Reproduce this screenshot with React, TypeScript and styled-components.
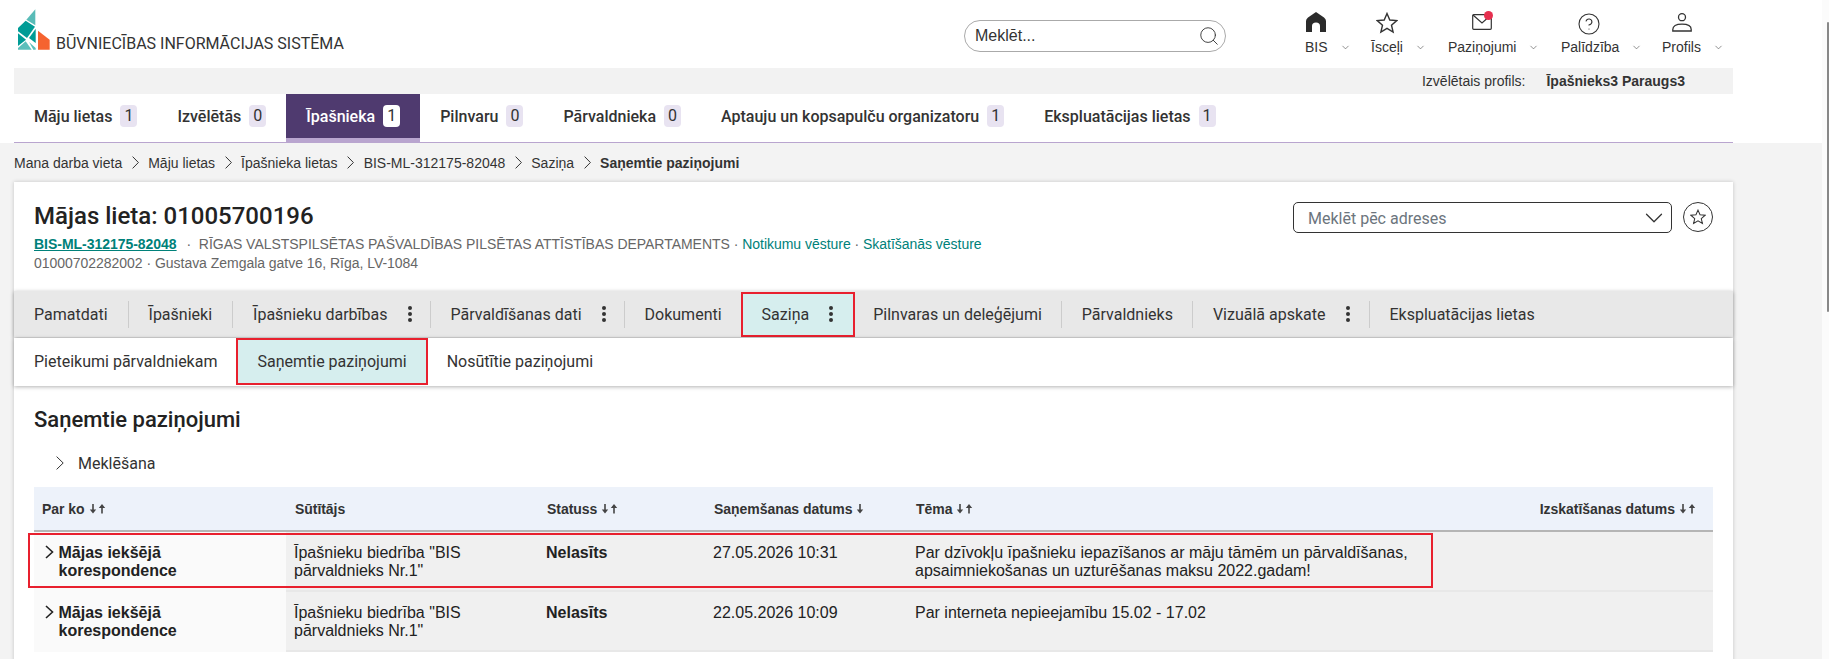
import React from "react";
import styled, { createGlobalStyle } from "styled-components";
import { ChevronDown, CircleHelp, Search } from "lucide-react";

const ARIAL = `"Liberation Sans", Arial, sans-serif`;

const Global = createGlobalStyle`
  html, body { margin: 0; padding: 0; background: #f3f3f3; overflow: hidden; }
  body { font-family: Roboto, "Liberation Sans", sans-serif; color: #222; }
  * { box-sizing: border-box; }
`;
const Page = styled.div`width: 1829px; height: 659px; overflow: hidden; position: relative;`;
const Header = styled.header`background: #fff; height: 143px;`;
const Top = styled.div`height: 68px; display: flex; align-items: flex-start;`;
const Brand = styled.div`display: flex; align-items: flex-end; margin: 9px 0 0 18px; width: 946px;`;
const BrandText = styled.span`font-size: 16px; margin-left: 6px; line-height: 16px; height: 14px; color: #333; white-space: nowrap;`;
const SearchBox = styled.div`margin-top: 20px; width: 262px; height: 32px; border: 1px solid #aaa; border-radius: 16px; display: flex; align-items: center; justify-content: space-between; padding: 0 5px 0 10px; font-family: ${ARIAL}; font-size: 16px; color: #333;`;
const Menu = styled.nav`display: flex; margin: 12px 0 0 79px;`;
const MenuItem = styled.div<{ $w: number }>`width: ${p => p.$w}px; display: flex; flex-direction: column; align-items: flex-start; font-family: ${ARIAL}; font-size: 14px; color: #333;`;
const MenuIcon = styled.div<{ $l: number; $t?: number }>`height: 26px; margin-left: ${p => p.$l}px; padding-top: ${p => p.$t ?? 0}px; position: relative;`;
const Dot = styled.span`position: absolute; width: 9px; height: 9px; border-radius: 50%; background: #e6304f; left: 12px; top: -1px;`;
const MenuLabel = styled.div`display: flex; align-items: center; gap: 12px; line-height: 18px; white-space: nowrap;`;
const Profile = styled.div`height: 26px; width: 1719px; margin-left: 14px; background: #f2f2f2; display: flex; justify-content: flex-end; align-items: center; font-family: ${ARIAL}; font-size: 14px; padding-right: 48px; gap: 21px; color: #333;`;
const ProfileName = styled.b`font-weight: 700;`;
const Tabs = styled.div`height: 49px; width: 1719px; margin-left: 14px; border-bottom: 1px solid #b9a5cf; display: flex;`;
const Tab = styled.div<{ $a?: boolean }>`padding: 0 20px; display: flex; align-items: center; gap: 8px; font-size: 16px; font-weight: 500; height: 48px; background: ${p => p.$a ? "#4f3a6f" : "transparent"}; color: ${p => p.$a ? "#fff" : "#333"}; border-bottom: 4px solid ${p => p.$a ? "#b9a5cf" : "transparent"}; white-space: nowrap;`;
const Count = styled.span<{ $a?: boolean }>`background: ${p => p.$a ? "#fff" : "#e8e3f1"}; color: #333; border-radius: 4px; font-weight: 400; padding: 0 4px; height: 22px; line-height: 22px; font-size: 16px;`;
const Main = styled.main`width: 1719px; margin-left: 14px;`;
const Crumbs = styled.div`height: 39px; display: flex; align-items: center; font-family: ${ARIAL}; font-size: 14px; color: #333; white-space: nowrap;`;
const CrumbLast = styled.b`font-weight: 700;`;
const CrumbGlyph = styled.svg`margin: 0 9.5px; flex: none;`;
const Card = styled.section`background: #fff; box-shadow: 0 0 4px rgba(0,0,0,.2); height: 500px;`;
const CardHead = styled.div`height: 109px; padding: 18px 20px 0; display: flex; justify-content: space-between;`;
const Title = styled.h1`font-size: 24px; font-weight: 500; margin: 0; line-height: 32px; color: #222;`;
const Meta = styled.div`font-family: ${ARIAL}; font-size: 14px; letter-spacing: -0.03px; color: #666; line-height: 19px; margin-top: 3px; white-space: nowrap; & + & { margin-top: 0; }`;
const CaseLink = styled.span`color: #00817a; font-weight: 700; text-decoration: underline; margin-right: 6px;`;
const MetaLink = styled.span`color: #00817a;`;
const HeadRight = styled.div`display: flex; gap: 11px; align-items: flex-start; padding-top: 2px;`;
const Select = styled.div`width: 379px; height: 31px; border: 1px solid #333; border-radius: 5px; display: flex; align-items: center; justify-content: space-between; padding: 1px 2px 0 14px; font-size: 16px; color: #6c757d;`;
const Round = styled.div`width: 30px; height: 30px; border: 1px solid #333; border-radius: 50%; display: flex; align-items: center; justify-content: center;`;
const Nav = styled.div`height: 46px; background: #e8e8e8; display: flex; align-items: center; box-shadow: 0 1px 4px rgba(0,0,0,.3); position: relative;`;
const NavItem = styled.div<{ $sep?: boolean; $l?: number; $r?: number }>`
  height: 27px;
  display: flex; align-items: center; gap: 12px;
  padding: 0 ${p => p.$r ?? 20}px 0 ${p => p.$l ?? 20}px;
  font-size: 16px; color: #333; white-space: nowrap;
  border-right: ${p => p.$sep ? "1px solid #ccc" : "0"};
`;
const NavMarked = styled(NavItem)`height: 45px; padding: 0 14px 0 21px; background: #d6eeee; outline: 2px solid #e8202e; outline-offset: -2px;`;
const Sub = styled.div`height: 48px; margin-top: 1px; background: #fff; display: flex; align-items: center; box-shadow: 0 1px 4px rgba(0,0,0,.3); position: relative;`;
const SubItem = styled.div`padding: 0 20px; height: 47px; margin-bottom: 1px; display: flex; align-items: center; font-size: 16px; color: #333;`;
const SubMarked = styled(SubItem)`padding: 0 21px; margin-left: -1px; margin-right: -1px; background: #d6eeee; outline: 2px solid #e8202e; outline-offset: -2px;`;
const Content = styled.div`padding: 20px 20px 0;`;
const H2 = styled.h2`font-size: 22px; font-weight: 500; margin: 0 0 19px; line-height: 28px; color: #222;`;
const Toggle = styled.div`display: flex; align-items: center; gap: 14px; padding-left: 22px; font-size: 16px; height: 20px; color: #333;`;
const Table = styled.div`margin-top: 14px; width: 1679px; position: relative;`;
const Row = styled.div<{ $h: number; $head?: boolean }>`display: grid; grid-template-columns: 252px 252px 167px 202px 1fr 196px; height: ${p => p.$h}px; background: ${p => p.$head ? "#edf2fa" : "#f0f0f0"}; border-bottom: ${p => p.$head ? "2px solid #b5b5b5" : "2px solid #e8e8e8"};`;
const Th = styled.div<{ $end?: boolean; $first?: boolean }>`font-family: ${ARIAL}; font-size: 14px; letter-spacing: -0.05px; font-weight: 700; padding: 0 ${p => p.$end ? 17 : 0}px 0 ${p => p.$first ? 8 : 9}px; display: flex; align-items: center; justify-content: ${p => p.$end ? "flex-end" : "flex-start"}; gap: 4px; white-space: nowrap; color: #333;`;
const Td = styled.div<{ $bold?: boolean }>`font-family: ${ARIAL}; font-size: 16px; line-height: 18px; padding: 12px 8px; font-weight: ${p => p.$bold ? 700 : 400}; color: #222;`;
const FirstTd = styled(Td)`background: #fafafa; display: flex; align-items: flex-start; gap: 4.5px; padding-left: 11px;`;
const RowGlyph = styled.svg`flex: none; margin-top: 1px;`;
const RowTitle = styled.span`width: 140px;`;
const RedBox = styled.div`position: absolute; left: -6px; top: 46px; width: 1405px; height: 55px; border: 2px solid #e8202e; pointer-events: none;`;
const Track = styled.div`position: absolute; right: 0; top: 0; width: 7px; height: 659px; background: #fbfbfb;`;
const Thumb = styled.div`position: absolute; right: 0; top: 22px; width: 2px; height: 290px; background: #888; border-radius: 2px;`;

const Sep = () => (
  <CrumbGlyph width="7" height="13" viewBox="0 0 7 13"><polyline points="0.6,0.6 6.4,6.5 0.6,12.4" fill="none" stroke="#333" strokeWidth="1" /></CrumbGlyph>
);
const ToggleChevron = () => (
  <svg width="8" height="14" viewBox="0 0 8 14"><polyline points="0.6,0.6 7.2,7 0.6,13.4" fill="none" stroke="#333" strokeWidth="1" /></svg>
);
const Dots = () => (
  <svg width="20" height="20" viewBox="0 0 20 20"><circle cx="10" cy="4" r="2" fill="#333" /><circle cx="10" cy="10" r="2" fill="#333" /><circle cx="10" cy="16" r="2" fill="#333" /></svg>
);
const RowChevron = () => (
  <RowGlyph width="9" height="14" viewBox="0 0 9 14"><polyline points="1,1 7.5,7 1,13" fill="none" stroke="#222" strokeWidth="1.6" /></RowGlyph>
);
const DownArrow = () => (
  <svg width="8" height="10" viewBox="0 0 8 10"><path d="M3.2 0 H4.8 V5.5 H7.2 L4 9.5 L0.8 5.5 H3.2 Z" fill="#444" /></svg>
);
const Sort = () => (
  <svg width="17" height="10" viewBox="0 0 17 10">
    <path d="M3.2 0 H4.8 V5.5 H7.2 L4 9.5 L0.8 5.5 H3.2 Z" fill="#444" />
    <path d="M12.2 9.5 H13.8 V4 H16.2 L13 0 L9.8 4 H12.2 Z" fill="#444" />
  </svg>
);
const StarIcon = ({ size }: { size: number }) => (
  <svg width={size} height={size} viewBox="0 0 22 22"><polygon points="11,1.5 13.8,8 20.8,8.6 15.5,13.2 17.1,20 11,16.4 4.9,20 6.5,13.2 1.2,8.6 8.2,8" fill="none" stroke="#333" strokeWidth="1.4" strokeLinejoin="miter" /></svg>
);
const HomeIcon = () => (
  <svg width="20" height="20" viewBox="0 0 20 20"><path d="M10 0 L18 5.5 Q20 7 20 9 V20 H14 V14 Q14 10.5 10 10.5 Q6 10.5 6 14 V20 H0 V9 Q0 7 2 5.5 Z" fill="#2b2b2b" /></svg>
);
const MailIcon = () => (
  <svg width="20" height="16" viewBox="0 0 20 16"><rect x="0.7" y="0.7" width="18.6" height="14.6" rx="1" fill="none" stroke="#333" strokeWidth="1.2" /><polyline points="1,1 10,9 19,1" fill="none" stroke="#333" strokeWidth="1.2" /></svg>
);
const UserIcon = () => (
  <svg width="20" height="19" viewBox="0 0 20 19"><circle cx="10" cy="4.2" r="3.5" fill="none" stroke="#333" strokeWidth="1.3" /><path d="M0.8 18 V16.5 Q0.8 11.2 10 11.2 Q19.2 11.2 19.2 16.5 V18 Z" fill="none" stroke="#333" strokeWidth="1.3" /></svg>
);
const Logo = () => (
  <svg width="32" height="41" viewBox="25 13 96 123">
    <polygon points="50,45 77,14 77,62" fill="#59bcb8" />
    <polygon points="25,70 48,48 76,66 52,100 25,80" fill="#009c96" />
    <polygon points="25,86 49,105 25,124" fill="#009c96" />
    <polygon points="78,72 78,115 58,100" fill="#009c96" />
    <polygon points="25,130 48,110 66,135 25,135" fill="#5bbfbb" />
    <polygon points="58,112 78,130 78,135 71,135" fill="#5bbfbb" />
    <polygon points="85,78 120,105 120,135 85,135" fill="#f56330" />
  </svg>
);
const MenuChevron = () => <ChevronDown size={11} strokeWidth={1.4} color="#555" />;

export default function App() {
  return (
    <Page>
      <Global />
      <Header>
        <Top>
          <Brand><Logo /><BrandText>BŪVNIECĪBAS INFORMĀCIJAS SISTĒMA</BrandText></Brand>
          <SearchBox>Meklēt...<Search size={22} strokeWidth={1} /></SearchBox>
          <Menu>
            <MenuItem $w={66}><MenuIcon $l={1}><HomeIcon /></MenuIcon><MenuLabel>BIS<MenuChevron /></MenuLabel></MenuItem>
            <MenuItem $w={77}><MenuIcon $l={5}><StarIcon size={22} /></MenuIcon><MenuLabel>Īsceļi<MenuChevron /></MenuLabel></MenuItem>
            <MenuItem $w={113}><MenuIcon $l={24} $t={2}><MailIcon /><Dot /></MenuIcon><MenuLabel>Paziņojumi<MenuChevron /></MenuLabel></MenuItem>
            <MenuItem $w={101}><MenuIcon $l={16}><CircleHelp size={24} strokeWidth={1.1} /></MenuIcon><MenuLabel>Palīdzība<MenuChevron /></MenuLabel></MenuItem>
            <MenuItem $w={70}><MenuIcon $l={10} $t={1}><UserIcon /></MenuIcon><MenuLabel>Profils<MenuChevron /></MenuLabel></MenuItem>
          </Menu>
        </Top>
        <Profile><span>Izvēlētais profils:</span><ProfileName>Īpašnieks3 Paraugs3</ProfileName></Profile>
        <Tabs>
          <Tab>Māju lietas <Count>1</Count></Tab>
          <Tab>Izvēlētās <Count>0</Count></Tab>
          <Tab $a>Īpašnieka <Count $a>1</Count></Tab>
          <Tab>Pilnvaru <Count>0</Count></Tab>
          <Tab>Pārvaldnieka <Count>0</Count></Tab>
          <Tab>Aptauju un kopsapulču organizatoru <Count>1</Count></Tab>
          <Tab>Ekspluatācijas lietas <Count>1</Count></Tab>
        </Tabs>
      </Header>
      <Main>
        <Crumbs>Mana darba vieta<Sep />Māju lietas<Sep />Īpašnieka lietas<Sep />BIS-ML-312175-82048<Sep />Saziņa<Sep /><CrumbLast>Saņemtie paziņojumi</CrumbLast></Crumbs>
        <Card>
          <CardHead>
            <div>
              <Title>Mājas lieta: 01005700196</Title>
              <Meta><CaseLink>BIS-ML-312175-82048</CaseLink> · &nbsp;RĪGAS VALSTSPILSĒTAS PAŠVALDĪBAS PILSĒTAS ATTĪSTĪBAS DEPARTAMENTS · <MetaLink>Notikumu vēsture</MetaLink> · <MetaLink>Skatīšanās vēsture</MetaLink></Meta>
              <Meta>01000702282002 · Gustava Zemgala gatve 16, Rīga, LV-1084</Meta>
            </div>
            <HeadRight>
              <Select>Meklēt pēc adreses<ChevronDown size={30} strokeWidth={1} color="#333" /></Select>
              <Round><StarIcon size={16} /></Round>
            </HeadRight>
          </CardHead>
          <Nav>
            <NavItem $sep>Pamatdati</NavItem>
            <NavItem $sep>Īpašnieki</NavItem>
            <NavItem $sep $r={10}>Īpašnieku darbības<Dots /></NavItem>
            <NavItem $sep $r={10}>Pārvaldīšanas dati<Dots /></NavItem>
            <NavItem $r={19}>Dokumenti</NavItem>
            <NavMarked>Saziņa<Dots /></NavMarked>
            <NavItem $sep $l={18} $r={19}>Pilnvaras un deleģējumi</NavItem>
            <NavItem $sep $r={19}>Pārvaldnieks</NavItem>
            <NavItem $sep $r={11}>Vizuālā apskate<Dots /></NavItem>
            <NavItem>Ekspluatācijas lietas</NavItem>
          </Nav>
          <Sub>
            <SubItem>Pieteikumi pārvaldniekam</SubItem>
            <SubMarked>Saņemtie paziņojumi</SubMarked>
            <SubItem>Nosūtītie paziņojumi</SubItem>
          </Sub>
          <Content>
            <H2>Saņemtie paziņojumi</H2>
            <Toggle><ToggleChevron />Meklēšana</Toggle>
            <Table>
              <Row $h={45} $head>
                <Th $first>Par ko <Sort /></Th><Th>Sūtītājs</Th><Th>Statuss <Sort /></Th><Th>Saņemšanas datums <DownArrow /></Th><Th>Tēma <Sort /></Th><Th $end>Izskatīšanas datums <Sort /></Th>
              </Row>
              <Row $h={60}>
                <FirstTd $bold><RowChevron /><RowTitle>Mājas iekšējā korespondence</RowTitle></FirstTd>
                <Td>Īpašnieku biedrība "BIS pārvaldnieks Nr.1"</Td><Td $bold>Nelasīts</Td><Td>27.05.2026 10:31</Td>
                <Td>Par dzīvokļu īpašnieku iepazīšanos ar māju tāmēm un pārvaldīšanas, apsaimniekošanas un uzturēšanas maksu 2022.gadam!</Td><Td />
              </Row>
              <Row $h={60}>
                <FirstTd $bold><RowChevron /><RowTitle>Mājas iekšējā korespondence</RowTitle></FirstTd>
                <Td>Īpašnieku biedrība "BIS pārvaldnieks Nr.1"</Td><Td $bold>Nelasīts</Td><Td>22.05.2026 10:09</Td>
                <Td>Par interneta nepieejamību 15.02 - 17.02</Td><Td />
              </Row>
              <RedBox />
            </Table>
          </Content>
        </Card>
      </Main>
      <Track><Thumb /></Track>
    </Page>
  );
}
